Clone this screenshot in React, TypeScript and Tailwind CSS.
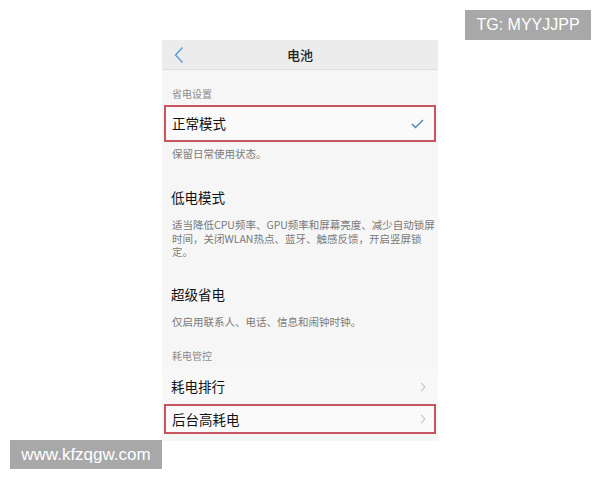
import React from 'react'

const font = { fontFamily: '"Noto Sans CJK SC", "Noto Sans", sans-serif' }

const Chevron = () => (
    <svg width="6" height="10" viewBox="0 0 6 10" fill="none" stroke="#c8c8c8" strokeWidth="1.1">
        <path d="M1 1l4 4-4 4" />
    </svg>
)

const SectionLabel = ({ text, className }: { text: string; className: string }) => (
    <div className={`flex items-end px-[10px] text-[10px] leading-[14px] text-[#8c8c8c] ${className}`}>{text}</div>
)

const Desc = ({ children, className }: { children: React.ReactNode; className: string }) => (
    <div className={`pl-[10px] pr-[2px] whitespace-nowrap text-[10.5px] leading-[13.5px] text-[#7a7a7a] ${className}`}>{children}</div>
)

const App = () => {
    return (
        <div className="relative w-[600px] h-[480px] bg-white" style={font}>
            <div className="ml-[162px] pt-[40px] w-[276px]">
                <div className="h-[401px] bg-[#f6f6f6] flex flex-col">
                    {/* header */}
                    <div className="h-[30px] bg-[#ececec] border-b border-[#dedede] flex items-center relative">
                        <svg className="ml-[12px]" width="10" height="18" viewBox="0 0 10 18" fill="none" stroke="#5a9ae0" strokeWidth="1.4">
                            <path d="M8.5 1.5L1.5 9l7 7.5" />
                        </svg>
                        <div className="absolute left-0 right-0 text-center text-[13px] font-medium text-[#222]">电池</div>
                    </div>

                    <SectionLabel text="省电设置" className="h-[35px] pb-[4px]" />

                    <div className="h-[37px] mx-[2px] border-2 border-[#c65560] bg-[#fafafa] flex items-center justify-between pl-[6px] pr-[10px]">
                        <span className="text-[13.5px] text-[#111]">正常模式</span>
                        <svg width="13" height="10" viewBox="0 0 13 10" fill="none" stroke="#4d84b8" strokeWidth="1.4">
                            <path d="M1 5l3.5 3.5L12 1" />
                        </svg>
                    </div>

                    <Desc className="pt-[5px] h-[26px]">保留日常使用状态。</Desc>

                    <div className="mt-[11px] h-[36px] flex items-center px-[9px] text-[13.5px] text-[#111]">低电模式</div>

                    <Desc className="pt-[3px] h-[61px]">
                        适当降低CPU频率、GPU频率和屏幕亮度、减少自动锁屏<br />
                        时间，关闭WLAN热点、蓝牙、触感反馈，开启竖屏锁<br />
                        定。
                    </Desc>

                    <div className="h-[36px] flex items-center px-[9px] text-[13.5px] text-[#111]">超级省电</div>

                    <Desc className="pt-[3px] h-[24px]">仅启用联系人、电话、信息和闹钟时钟。</Desc>

                    <SectionLabel text="耗电管控" className="h-[33px] pb-[6px]" />

                    <div className="h-[35px] flex items-center justify-between px-[9px] pr-[12px] bg-[#f8f8f8]">
                        <span className="text-[13.5px] text-[#111]">耗电排行</span>
                        <Chevron />
                    </div>

                    <div className="h-[30px] mx-[2px] border-2 border-[#c65560] bg-[#fafafa] flex items-center justify-between pl-[6px] pr-[8px]">
                        <span className="text-[13.5px] text-[#111]">后台高耗电</span>
                        <Chevron />
                    </div>
                </div>
            </div>

            {/* watermarks */}
            <div className="absolute left-[465px] top-[10px] w-[126px] h-[30px] bg-[#a8a8a8] flex items-center justify-center text-white text-[16px]" style={{ fontFamily: '"Liberation Sans", Arial, sans-serif' }}>
                TG: MYYJJPP
            </div>
            <div className="absolute left-[10px] top-[440px] w-[152px] h-[29px] bg-[#a8a8a8] flex items-center justify-center text-white text-[17px]" style={{ fontFamily: '"Liberation Sans", Arial, sans-serif' }}>
                www.kfzqgw.com
            </div>
        </div>
    )
}

export default App
